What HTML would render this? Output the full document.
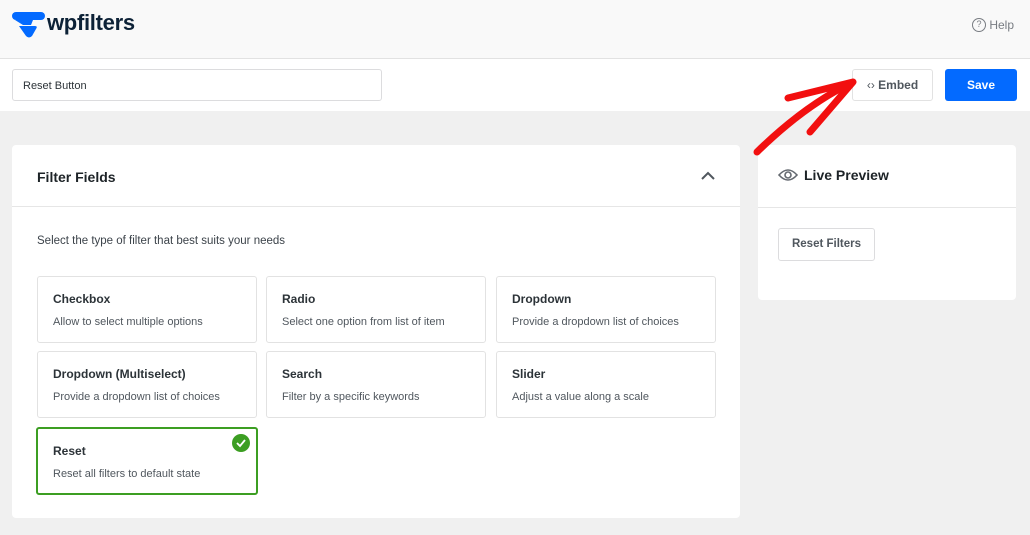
<!DOCTYPE html>
<html><head><meta charset="utf-8"><style>
*{box-sizing:border-box;margin:0;padding:0}
body{width:1030px;height:535px;overflow:hidden;background:#f0f0f0;font-family:"Liberation Sans",Arial,sans-serif;color:#3c434a;position:relative}
.top{position:absolute;left:0;top:0;width:1030px;height:59px;background:#f9f9f9;border-bottom:1px solid #e2e2e2}
.bar{position:absolute;left:0;top:59px;width:1030px;height:52px;background:#fff}
.inp{position:absolute;left:12px;top:69px;width:370px;height:32px;border:1px solid #dcdcde;border-radius:3px;font-size:11px;padding:10px 10px;color:#2c3338}
.embed{position:absolute;left:852px;top:69px;width:81px;height:32px;border:1px solid #e2e2e2;border-radius:3px;font-size:12px;font-weight:bold;color:#50575e;line-height:30px;text-align:center}
.save{position:absolute;left:945px;top:69px;width:72px;height:32px;background:#036aff;border-radius:3px;color:#fff;font-size:12px;font-weight:bold;line-height:32px;text-align:center}
.card{position:absolute;background:#fff;border-radius:4px}
.hd{height:62px;border-bottom:1px solid #e6e6e6;font-weight:bold;font-size:14px;color:#1d2327}
.opt{position:absolute;width:220px;height:67px;border:1px solid #e2e2e2;border-radius:3px;padding:15px 15px}
.opt b{display:block;font-size:12px;color:#2c3338;margin-bottom:6px}
.opt span{font-size:11px;color:#50575e}
</style></head><body>
<div class="top"></div>
<svg style="position:absolute;left:11px;top:11px" width="36" height="30" viewBox="0 0 36 30"><rect x="1" y="1" width="33" height="8" rx="4" fill="#036aff"/><path d="M4 9 L22 9 L20 14 L12 14 Z" fill="#036aff"/><path d="M8 15 L24 15 Q27 15 25 18 L21 25 Q18 28 15 25 Z" fill="#036aff"/></svg>
<div style="position:absolute;left:47px;top:10px;font-size:22px;font-weight:bold;color:#0d2237;letter-spacing:-0.3px">wpfilters</div>
<div style="position:absolute;left:972px;top:18px;font-size:12px;color:#787c82;line-height:15px"><span style="display:inline-block;width:14px;height:14px;border:1.5px solid #787c82;border-radius:50%;font-size:9px;text-align:center;line-height:11px;vertical-align:top">?</span> Help</div>
<div class="bar"></div>
<div class="inp">Reset Button</div>
<div class="embed"><span style="font-weight:normal">‹›</span> Embed</div>
<div class="save">Save</div>
<div class="card" style="left:12px;top:145px;width:728px;height:373px">
<div class="hd" style="padding:24px 25px">Filter Fields<svg style="position:absolute;left:688px;top:25px" width="16" height="12"><path d="M2 9 L8 3 L14 9" stroke="#50575e" stroke-width="2" fill="none"/></svg></div>
<div style="position:absolute;left:25px;top:90px;font-size:11.5px;color:#3c434a">Select the type of filter that best suits your needs</div>
<div class="opt" style="left:25px;top:131px"><b>Checkbox</b><span>Allow to select multiple options</span></div>
<div class="opt" style="left:254px;top:131px"><b>Radio</b><span>Select one option from list of item</span></div>
<div class="opt" style="left:484px;top:131px"><b>Dropdown</b><span>Provide a dropdown list of choices</span></div>
<div class="opt" style="left:25px;top:206px"><b>Dropdown (Multiselect)</b><span>Provide a dropdown list of choices</span></div>
<div class="opt" style="left:254px;top:206px"><b>Search</b><span>Filter by a specific keywords</span></div>
<div class="opt" style="left:484px;top:206px"><b>Slider</b><span>Adjust a value along a scale</span></div>
<div class="opt" style="left:24px;top:282px;width:222px;height:68px;border:2px solid #3c9e22"><b>Reset</b><span>Reset all filters to default state</span>
<svg style="position:absolute;right:6px;top:5px" width="18" height="18"><circle cx="9" cy="9" r="9" fill="#3c9e22"/><path d="M5 9 L8 12 L13 6" stroke="#fff" stroke-width="1.8" fill="none"/></svg></div>
</div>
<div class="card" style="left:758px;top:145px;width:258px;height:155px">
<div class="hd" style="padding:22px 20px;height:63px"><svg width="20" height="14" style="vertical-align:-2px;margin-right:6px"><path d="M1 7 Q10 -3 19 7 Q10 17 1 7Z" stroke="#646970" stroke-width="1.6" fill="none"/><circle cx="10" cy="7" r="3" stroke="#646970" stroke-width="1.6" fill="none"/></svg>Live Preview</div>
<div style="position:absolute;left:20px;top:83px;width:97px;height:33px;border:1px solid #dcdcde;border-radius:3px;font-size:11.5px;font-weight:bold;color:#50575e;text-align:center;line-height:31px">Reset Filters</div>
</div>
<svg style="position:absolute;left:0;top:0" width="1030" height="535"><path d="M757 152 Q805 105 853 82 M853 82 L788 98 M853 82 L810 132" stroke="#f20f0f" stroke-width="7" stroke-linecap="round" stroke-linejoin="round" fill="none"/></svg>
</body></html>
